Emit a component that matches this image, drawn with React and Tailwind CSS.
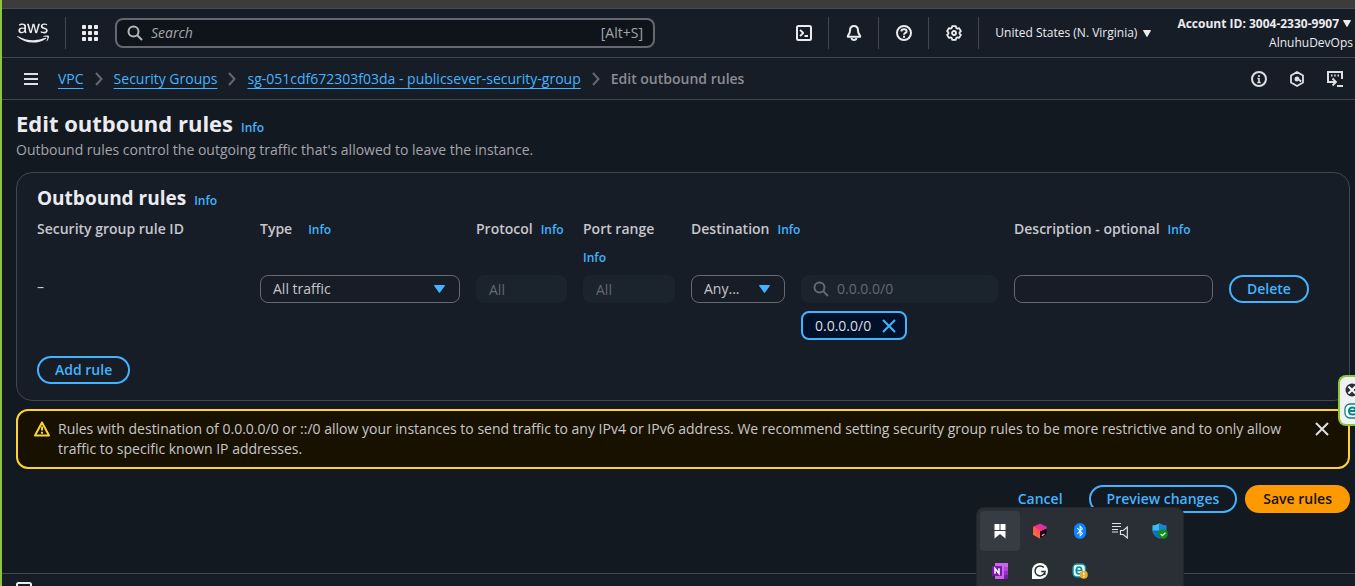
import React from "react";
import { FaAws, FaBluetoothB } from "react-icons/fa";

function Info() {
  return (
    <a href="#info" className="text-xs font-semibold text-[#42b4ff]">
      Info
    </a>
  );
}

function Icon({ children, className = "size-4" }) {
  return (
    <svg
      viewBox="0 0 16 16"
      fill="none"
      stroke="currentColor"
      strokeWidth="2"
      strokeLinejoin="round"
      aria-hidden="true"
      className={`${className} shrink-0`}
    >
      {children}
    </svg>
  );
}

function SearchIcon({ className }) {
  return (
    <Icon className={className}>
      <circle cx="6.5" cy="6.5" r="5" />
      <path d="m10 10 5 5" />
    </Icon>
  );
}

function Caret({ className = "h-2 w-2" }) {
  return (
    <svg viewBox="0 0 10 8" preserveAspectRatio="none" fill="currentColor" aria-hidden="true" className={`${className} shrink-0`}>
      <path d="M.6 0h8.8c.5 0 .7.5.4.9L5.5 7.6c-.3.4-.7.4-1 0L.2.9C-.1.5.1 0 .6 0Z" />
    </svg>
  );
}

function NavIcon({ label, children }) {
  return (
    <button type="button" aria-label={label} className="flex h-8 w-[50px] items-center justify-center border-r border-[#424650]">
      <Icon>{children}</Icon>
    </button>
  );
}

function Separator() {
  return (
    <svg viewBox="0 0 8 14" fill="none" stroke="#656871" strokeWidth="2" className="h-3.5 w-2 shrink-0" aria-hidden="true">
      <path d="m1 1 5.5 6L1 13" />
    </svg>
  );
}

function TopNav() {
  return (
    <header className="flex h-[49px] shrink-0 items-center border-b border-[#424650] text-[#ebebf0]">
      <a href="#home" aria-label="AWS home" className="pl-[15px] pr-4">
        <FaAws className="size-8" />
      </a>
      <span className="h-8 w-px bg-[#424650]" />
      <button type="button" aria-label="Services" className="ml-4">
        <svg viewBox="0 0 16 16" fill="currentColor" className="size-4">
          {[0, 6, 12].map((y) =>
            [0, 6, 12].map((x) => <rect key={`${x}-${y}`} x={x} y={y} width="4" height="4" rx="0.8" />)
          )}
        </svg>
      </button>
      <label className="ml-[17px] flex h-[30px] w-[540px] items-center gap-2 rounded-lg border-2 border-[#656871] bg-[#0f141a] px-[10px] text-[#b4b4bb]">
        <SearchIcon className="size-4" />
        <input
          type="search"
          aria-label="Search"
          placeholder="Search"
          className="min-w-0 flex-1 bg-transparent text-sm italic outline-none placeholder:text-[#a4a4ad]"
        />
        <span className="text-sm text-[#a4a4ad]">[Alt+S]</span>
      </label>
      <div className="ml-auto flex items-center">
        <NavIcon label="CloudShell">
          <rect x="1" y="1" width="14" height="14" rx="1.5" />
          <path d="M4 4.8 7.2 8 4 11.2M8.5 11H12" strokeWidth="1.8" />
        </NavIcon>
        <NavIcon label="Notifications">
          <path d="M8 1C5.3 1 4 3 4 5.5 4 9 1.800 9.500 1.800 11.800h12.400C14.200 9.500 12 9 12 5.500 12 3 10.700 1 8 1Z" />
          <path d="M5.5 13c.3 1.4 1.3 2 2.5 2s2.200-.6 2.500-2" />
        </NavIcon>
        <NavIcon label="Help">
          <circle cx="8" cy="8" r="7" />
          <path d="M5.400 6.500C5.400 5 6.500 4.200 8 4.200s2.600.8 2.600 2.200C10.600 8 8 7.900 8 9.800M8 10.800v1.900" />
        </NavIcon>
        <NavIcon label="Settings">
          <path d="m6.200 1.200-.4 1.700-1.200.7-1.700-.5L1.100 6.200l1.300 1.200v1.300l-1.300 1.200 1.800 3 1.700-.5 1.200.7.4 1.700h3.600l.4-1.700 1.200-.7 1.700.5 1.800-3-1.300-1.200V7.400l1.300-1.200-1.800-3.100-1.700.5-1.200-.7-.4-1.700Z" strokeWidth="1.8" />
          <circle cx="8" cy="8" r="2" strokeWidth="1.8" />
        </NavIcon>
        <button type="button" className="ml-4 flex items-center gap-1.5 text-xs">
          United States (N. Virginia)
          <Caret className="h-[7px] w-2" />
        </button>
        <button type="button" className="ml-[26px] flex flex-col items-end pr-0.5 text-xs leading-[19px]">
          <span className="flex items-center gap-1 pr-0.5 font-bold">
            Account ID: 3004-2330-9907
            <Caret className="h-[7px] w-2" />
          </span>
          <span>AlnuhuDevOps</span>
        </button>
      </div>
    </header>
  );
}

function Breadcrumbs() {
  const link = "text-[#42b4ff] underline decoration-1 underline-offset-4 [text-decoration-skip-ink:none]";
  return (
    <div className="flex h-[42px] shrink-0 items-center border-b border-[#424650] pl-[22px] pr-3 text-sm text-[#dedee3]">
      <button type="button" aria-label="Open navigation" className="mr-5">
        <svg viewBox="0 0 14 12" stroke="currentColor" strokeWidth="2" className="h-3 w-3.5">
          <path d="M0 1h14M0 6h14M0 11h14" />
        </svg>
      </button>
      <nav aria-label="Breadcrumbs" className="flex items-center gap-[11px]">
        <a href="#vpc" className={link}>VPC</a>
        <Separator />
        <a href="#groups" className={link}>Security Groups</a>
        <Separator />
        <a href="#group" className={link}>sg-051cdf672303f03da - publicsever-security-group</a>
        <Separator />
        <span className="font-semibold text-[#8c8c94]">Edit outbound rules</span>
      </nav>
      <div className="ml-auto flex gap-[22px]">
        <button type="button" aria-label="Help panel">
          <Icon>
            <circle cx="8" cy="8" r="7" />
            <path d="M8 4v2M6.5 7.5H8V11M6.3 11.5h3.4" strokeWidth="1.6" />
          </Icon>
        </button>
        <button type="button" aria-label="Recent activity">
          <Icon>
            <path d="m8 1 6 3.500v7L8 15l-6-3.500v-7Z" strokeWidth="1.8" />
            <path d="M8 5.500A2.500 2.500 0 1 0 8 10.500L9.500 9.700l2.200 1.500 1-1.600-2.300-1.500A2.500 2.500 0 0 0 8 5.500Z" fill="currentColor" stroke="none" />
          </Icon>
        </button>
        <button type="button" aria-label="Console tools">
          <Icon>
            <path d="M4 11H1V1h14v7" strokeLinejoin="miter" />
            <path d="M4 4.500h1.500M7.200 4.500h1.500M10.500 4.500H12" />
            <path d="M3 11h5M5.500 7.500 9 11l-3.500 3.500M10 15h6" strokeWidth="1.8" strokeLinejoin="miter" />
          </Icon>
        </button>
      </div>
    </div>
  );
}

function OutlineButton({ children, className = "" }) {
  return (
    <button
      type="button"
      className={`h-7 rounded-full border-2 border-[#42b4ff] px-4 text-sm font-semibold leading-5 text-[#42b4ff] ${className}`}
    >
      {children}
    </button>
  );
}

function SelectBox({ id, value }) {
  return (
    <div className="relative">
      <select
        id={id}
        defaultValue={value}
        className="block h-7 w-full appearance-none rounded-lg border border-[#656871] bg-[#161d26] px-3 text-sm text-[#c6c6cd]"
      >
        <option>{value}</option>
      </select>
      <span className="pointer-events-none absolute inset-y-0 right-[15px] flex items-center text-[#42b4ff]">
        <Caret className="h-2 w-[11px]" />
      </span>
    </div>
  );
}

function RulesPanel() {
  const disabled = "block h-7 w-full min-w-0 rounded-lg bg-[#1b232d] px-[13px] text-sm placeholder:text-[#656871]";
  return (
    <section className="mt-3 rounded-2xl border border-[#424650] bg-[#161d26] px-5 pb-4 pt-[13px]">
      <h2 className="flex items-baseline gap-2 text-[19px] font-bold leading-6 text-[#ebebf0]">
        Outbound rules <Info />
      </h2>
      <div className="mt-[5px] grid grid-cols-[minmax(0,207fr)_minmax(0,200fr)_minmax(0,91fr)_minmax(0,92fr)_minmax(0,94fr)_minmax(0,197fr)_minmax(0,199fr)_minmax(0,100fr)] gap-x-4 text-sm text-[#c6c6cd]">
        <div className="font-semibold leading-7">Security group rule ID</div>
        <div className="flex items-baseline gap-4 font-semibold leading-7">
          <label htmlFor="type">Type</label> <Info />
        </div>
        <div className="flex items-baseline gap-2 whitespace-nowrap font-semibold leading-7">
          <label htmlFor="protocol">Protocol</label> <Info />
        </div>
        <div className="flex flex-col font-semibold leading-7">
          <label htmlFor="ports">Port range</label>
          <span>
            <Info />
          </span>
        </div>
        <div className="col-span-2 flex items-baseline gap-2 font-semibold leading-7">
          <label htmlFor="destination">Destination</label> <Info />
        </div>
        <div className="col-span-2 flex items-baseline gap-2 font-semibold leading-7">
          <label htmlFor="description">Description - optional</label> <Info />
        </div>

        <div className="mt-1 leading-6">–</div>
        <div className="mt-1">
          <SelectBox id="type" value="All traffic" />
        </div>
        <div className="mt-1">
          <input id="protocol" disabled placeholder="All" className={disabled} />
        </div>
        <div className="mt-1">
          <input id="ports" disabled placeholder="All" className={disabled} />
        </div>
        <div className="mt-1">
          <SelectBox id="destination" value="Any..." />
        </div>
        <div className="mt-1">
          <label className="flex h-7 items-center gap-2 rounded-lg bg-[#1b232d] px-3 text-[#656871]">
            <SearchIcon className="size-4" />
            <input
              disabled
              aria-label="Destination address"
              placeholder="0.0.0.0/0"
              className="min-w-0 flex-1 bg-transparent text-sm placeholder:text-[#656871]"
            />
          </label>
          <div className="mt-2 flex h-[29px] w-fit items-center gap-2.5 rounded-lg border-2 border-[#42b4ff] bg-[#001129] pl-3 pr-2 text-[#dedee3]">
            0.0.0.0/0
            <button type="button" aria-label="Remove 0.0.0.0/0" className="text-[#42b4ff]">
              <Icon>
                <path d="m2 2 12 12M14 2 2 14" />
              </Icon>
            </button>
          </div>
        </div>
        <div className="mt-1">
          <input
            id="description"
            className="block h-7 w-full rounded-lg border border-[#656871] bg-[#161d26] px-3 text-sm"
          />
        </div>
        <div className="mt-1">
          <OutlineButton>Delete</OutlineButton>
        </div>
      </div>
      <OutlineButton className="mt-4">Add rule</OutlineButton>
    </section>
  );
}

function Warning() {
  return (
    <div role="alert" className="mt-2 flex items-start gap-2 rounded-xl border-2 border-[#fbd332] bg-[#191100] px-4 py-2 text-sm leading-5 text-[#c6c6cd]">
      <span className="flex h-5 items-center text-[#fbd332]">
        <Icon>
          <path d="M8 1.5 1 14.5h14Z" />
          <path d="M8 5.5v4M8 10.7v2" />
        </Icon>
      </span>
      <p className="max-w-[1240px] flex-1">
        Rules with destination of 0.0.0.0/0 or ::/0 allow your instances to send traffic to any IPv4 or IPv6 address. We
        recommend setting security group rules to be more restrictive and to only allow traffic to specific known IP
        addresses.
      </p>
      <button type="button" aria-label="Dismiss" className="ml-auto mr-0.5 flex h-5 items-center text-[#dedee3]">
        <Icon>
          <path d="m2 2 12 12M14 2 2 14" />
        </Icon>
      </button>
    </div>
  );
}

function TrayButton({ label, active, children }) {
  return (
    <button
      type="button"
      aria-label={label}
      className={`flex size-10 items-center justify-center rounded ${active ? "bg-[#373b43]" : ""}`}
    >
      <svg viewBox="0 0 16 16" className="size-4" aria-hidden="true">
        {children}
      </svg>
    </button>
  );
}

function SystemTray() {
  return (
    <div className="absolute bottom-0 right-[171px] grid h-[79px] grid-cols-5 overflow-hidden rounded-t-lg border border-b-0 border-[#20262c] bg-[#2a2f35] px-[3px] pt-[3px]">
      <TrayButton label="Bookmarks" active>
        <path d="M2.5 1h5v6h-5zM8.5 1h5v6h-5zM2.5 8h11v7.5L8 11l-5.5 4.5z" fill="#fff" />
      </TrayButton>
      <TrayButton label="Toolbox">
        <defs>
          <linearGradient id="cube" x1="0" y1="1" x2="1" y2="0">
            <stop offset="0" stopColor="#ff8a2b" />
            <stop offset="0.5" stopColor="#ff2f73" />
            <stop offset="1" stopColor="#a033e8" />
          </linearGradient>
        </defs>
        <path d="m8 .5 6.800 3.300v8L8 15.500l-6.800-3.700v-8Z" fill="url(#cube)" />
        <path d="m8 8.500 6.800-3v6.300L8 15.500Z" fill="#180814" />
        <path d="m1.200 3.800 6.800 3.700v8l-6.800-3.700Z" fill="#ff6a45" opacity="0.6" />
        <path d="m9.800 12.500 2.700-1.200" stroke="#fff" strokeWidth="1" />
      </TrayButton>
      <button type="button" aria-label="Bluetooth" className="flex size-10 items-center justify-center">
        <span className="flex h-4 w-3 items-center justify-center rounded-full bg-[#0a84ff] text-white">
          <FaBluetoothB className="size-3" />
        </span>
      </button>
      <TrayButton label="Audio reader">
        <path d="M0 .5h9M0 3.5h9M0 6.5h6M0 9h6" stroke="#dedee3" strokeWidth="1" />
        <path d="M8.500 7.500h2.800l4-3.500v11l-4-3.500H8.500Z" fill="none" stroke="#dedee3" strokeWidth="1.2" />
      </TrayButton>
      <TrayButton label="Windows Security">
        <path d="M7.500 0C5.500 1.600 3 2.300.5 2.300V7c0 4 3 6.800 7 8.500Z" fill="#38bdf2" />
        <path d="M7.500 0c2 1.600 4.500 2.300 7 2.300V7c0 4-3 6.800-7 8.500Z" fill="#1688d4" />
        <path d="M.5 7.500h7v8C3.800 13.900.8 11 .5 7.500Z" fill="#0b6fc0" />
        <circle cx="11" cy="11" r="4.8" fill="#0f9018" />
        <path d="m8.700 11 1.700 1.700 3-3" fill="none" stroke="#fff" strokeWidth="1.3" />
      </TrayButton>
      <TrayButton label="OneNote">
        <path d="M3 0h13v16H3z" fill="#ca64ea" />
        <path d="M12 4h4v4h-4z" fill="#ae4bd5" />
        <path d="M12 8h4v4h-4z" fill="#9332bf" />
        <path d="M12 12h4v4h-4z" fill="#7719aa" />
        <rect y="3" width="10" height="10" rx="1" fill="#7719aa" />
        <path d="M3 10.800V5.500l4 5V5.200" fill="none" stroke="#fff" strokeWidth="1.5" />
      </TrayButton>
      <TrayButton label="Grammarly">
        <path d="M8 0a8 8 0 1 1 0 16H0V8a8 8 0 0 1 8-8Z" fill="#fff" />
        <path d="M11.800 4.600A5 5 0 1 0 13 8.600H9.200M12.800 8.600V12" fill="none" stroke="#2a2f35" strokeWidth="1.5" />
      </TrayButton>
      <TrayButton label="Antivirus">
        <rect x="1" y="1" width="12.5" height="13" rx="4" fill="#eefafa" stroke="#0a8f99" strokeWidth="1.4" />
        <path d="M4.300 7.500h5.400c0-2.400-1-3.500-2.700-3.500S4.300 5.200 4.300 7.500 5.500 11 7.200 11c1 0 1.800-.3 2.300-.9" fill="none" stroke="#0a8f99" strokeWidth="1.7" />
        <circle cx="11.8" cy="11.8" r="4" fill="#f0a828" />
        <path d="M11.800 9.500v2.700M11.800 13v1.200" stroke="#fff" strokeWidth="1.2" />
      </TrayButton>
    </div>
  );
}

function SideWidget() {
  return (
    <aside aria-label="Protection widget" className="absolute right-0 top-[375px] h-[51px] w-[17px] overflow-hidden rounded-l-lg border-2 border-r-0 border-[#8cc63f] bg-[#f1f1f3]">
      <svg viewBox="0 0 15 47" className="h-[47px] w-[15px]" aria-hidden="true">
        <circle cx="12" cy="13" r="6.5" fill="#2b2f38" />
        <path d="m8.5 9.5 7 7M15.5 9.5l-7 7" stroke="#fff" strokeWidth="2" />
        <rect x="5" y="27" width="17" height="14" rx="5" fill="#fff" stroke="#0a8088" strokeWidth="1.3" />
        <path d="M9 34h6.500c0-2.500-1.200-3.600-3-3.600S9 31.700 9 34s1.500 3.600 3.500 3.600c1.200 0 2-.3 2.600-.9" fill="none" stroke="#0a8088" strokeWidth="2" />
      </svg>
    </aside>
  );
}

export default function App() {
  return (
    <div className="relative flex h-screen flex-col overflow-hidden border-l-2 border-[#8cc63f] bg-[#161d26] font-['Open_Sans','Noto_Sans',sans-serif]">
      <div className="h-[9px] shrink-0 border-b border-[#4a4a4a] bg-[#3c3c3c]" />
      <TopNav />
      <Breadcrumbs />
      <main className="flex-1 bg-[#131920] pl-3.5 pr-[5px] pt-2">
        <h1 className="flex items-baseline gap-2 text-[22px] font-bold leading-[30px] text-[#ebebf0]">
          Edit outbound rules <Info />
        </h1>
        <p className="mt-0.5 text-sm text-[#a4a4ad]">
          Outbound rules control the outgoing traffic that's allowed to leave the instance.
        </p>
        <RulesPanel />
        <Warning />
        <div className="mt-4 flex justify-end gap-2">
          <button type="button" className="h-7 px-[18px] text-sm font-semibold text-[#42b4ff]">
            Cancel
          </button>
          <OutlineButton>Preview changes</OutlineButton>
          <button type="button" className="h-7 rounded-full bg-[#ff9900] px-[18px] text-sm font-semibold text-[#0f141a]">
            Save rules
          </button>
        </div>
      </main>
      <footer className="h-[13px] shrink-0 overflow-hidden border-t border-[#424650] bg-[#161d26] pl-3.5 pt-2">
        <button type="button" aria-label="CloudShell" className="block text-[#ebebf0]">
          <Icon>
            <rect x="1" y="1" width="14" height="14" rx="1.5" />
          </Icon>
        </button>
      </footer>
      <SystemTray />
      <SideWidget />
    </div>
  );
}
